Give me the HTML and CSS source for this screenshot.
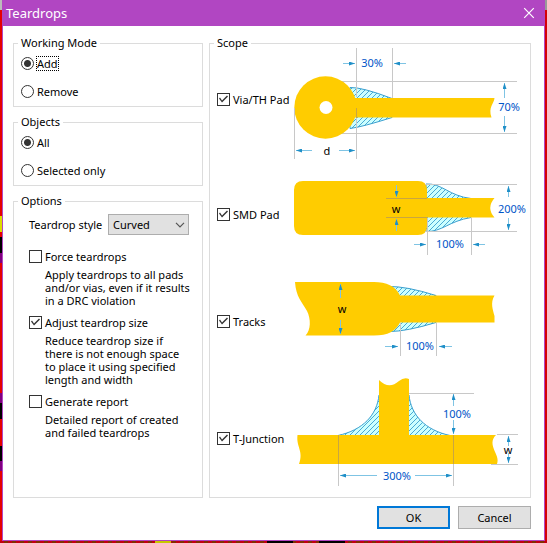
FILE: index.html
```
<!DOCTYPE html>
<html lang="en">
<head>
<meta charset="utf-8">
<title>Teardrops</title>
<link rel="stylesheet" href="styles.css">
</head>
<body>
<form class="dialog">
  <header class="titlebar">
    <h1 class="title">Teardrops</h1>
    <button type="button" class="close" aria-label="Close">
      <svg width="12" height="12" viewBox="0 0 12 12"><path d="M1.2 1.2L10.8 10.8M10.8 1.2L1.2 10.8" stroke="#fff" stroke-width="1.2" fill="none"/></svg>
    </button>
  </header>
  <main class="content">
    <div class="settings">
      <fieldset class="group modes">
        <legend>Working Mode</legend>
        <label class="choice focused"><input type="radio" name="mode" checked><span>Add</span></label>
        <label class="choice"><input type="radio" name="mode"><span>Remove</span></label>
      </fieldset>
      <fieldset class="group modes">
        <legend>Objects</legend>
        <label class="choice"><input type="radio" name="objects" checked><span>All</span></label>
        <label class="choice"><input type="radio" name="objects"><span>Selected only</span></label>
      </fieldset>
      <fieldset class="group options">
        <legend>Options</legend>
        <div class="option-list">
          <div class="style-row">
            <label for="style">Teardrop style</label>
            <div class="select">
              <select id="style"><option>Curved</option><option>Line</option></select>
              <svg class="chevron" width="10" height="6" viewBox="0 0 10 6"><path d="M1 .8L5 4.8L9 .8" fill="none" stroke="#555" stroke-width="1.2"/></svg>
            </div>
          </div>
          <div class="option">
            <label class="choice"><input type="checkbox"><span>Force teardrops</span></label>
            <p>Apply teardrops to all pads<br>and/or vias, even if it results<br>in a DRC violation</p>
          </div>
          <div class="option">
            <label class="choice"><input type="checkbox" checked><span>Adjust teardrop size</span></label>
            <p>Reduce teardrop size if<br>there is not enough space<br>to place it using specified<br>length and width</p>
          </div>
          <div class="option">
            <label class="choice"><input type="checkbox"><span>Generate report</span></label>
            <p>Detailed report of created<br>and failed teardrops</p>
          </div>
        </div>
      </fieldset>
    </div>
    <fieldset class="group scope">
      <legend>Scope</legend>
      <div class="scope-row">
        <label class="choice"><input type="checkbox" checked><span>Via/TH Pad</span></label>
        <svg class="diagram" height="98" viewBox="293 50 237 98">
          <defs>
            <pattern id="hatch" width="5" height="5" patternUnits="userSpaceOnUse">
              <rect width="5" height="5" fill="#ccffff"/>
              <path d="M-1 1L1 -1M0 5L5 0M4 6L6 4" stroke="#3a9fcf" stroke-width="0.9"/>
            </pattern>
            <marker id="tip" viewBox="0 0 6 4" refX="6" refY="2" markerWidth="6" markerHeight="4" markerUnits="userSpaceOnUse" orient="auto">
              <path d="M0 0L6 2L0 4Z" fill="#1f8fc8"/>
            </marker>
          </defs>
          <path class="guide" d="M340 81.5H517M340 133.5H517"/>
          <path class="tear" d="M350 87.5Q362 87 392 98.5V117.5Q362 127 350 128.5Z"/>
          <circle class="copper" cx="325.5" cy="107.500" r="31.2"/>
          <path class="copper" d="M350 98H494.500C494 104 488 107 491.500 117.500H350Z"/>
          <circle cx="326" cy="107.500" r="6.500" fill="#fff"/>
          <path class="guide" d="M356.500 48V97M392.500 48V98M294.500 108V159M356.500 118V159"/>
          <path class="guide on-copper" d="M356.500 108V118"/>
          <g class="arrow">
            <path d="M343 63.500H355"/><path d="M406 63.500H394"/>
            <path d="M312 150.500H296"/><path d="M339 150.500H355"/>
            <path d="M504.500 98V83"/><path d="M504.500 116V132"/>
          </g>
          <text class="dim" x="372" y="67">30%</text>
          <text class="dim" x="509" y="111">70%</text>
          <text class="dim name" x="327" y="155">d</text>
        </svg>
      </div>
      <div class="scope-row">
        <label class="choice"><input type="checkbox" checked><span>SMD Pad</span></label>
        <svg class="diagram" height="98" viewBox="293 165 237 98">
          <path class="tear" d="M426 184C442 183 449 196 471 198.500V217.500C449 221 442 232 426 231.500Z"/>
          <path class="copper" d="M303 181H418Q427 181 427 190V198H494.500Q486 208 494.500 217.500H427V226Q427 235 418 235H303Q294 235 294 226V190Q294 181 303 181Z"/>
          <path class="guide" d="M425 184.500H517M425 231.500H517M427.500 218V255M471.500 218V255"/>
          <path class="guide on-copper" d="M386 198.500H427M386 217.500H427"/>
          <g class="arrow">
            <path d="M396.500 185V197"/><path d="M396.500 231V219"/>
            <path d="M508.500 197V186"/><path d="M508.500 218V230"/>
            <path d="M414 244.500H426"/><path d="M485 244.500H473"/>
          </g>
          <text class="dim name" x="396" y="213">w</text>
          <text class="dim" x="512" y="213">200%</text>
          <text class="dim" x="450" y="248">100%</text>
        </svg>
      </div>
      <div class="scope-row">
        <label class="choice"><input type="checkbox" checked><span>Tracks</span></label>
        <svg class="diagram" height="82" viewBox="293 280 237 82">
          <path class="tear" d="M388 286.500Q406 286 436 295.500V322.500Q406 331.500 390 331.500Z"/>
          <path class="copper" d="M295 282H374C386 282 396 286 400 295.500H494.500C490 303 493 310 494.500 316V322.500H400C396 331 388 335.500 374 335.500H305.500C311 330 311 319 307 311C302 302 296 297 295 282Z"/>
          <path class="guide" d="M400.500 323V356M436.500 323V356"/>
          <g class="arrow">
            <path d="M340.500 298V284"/><path d="M340.500 320V334"/>
            <path d="M385 346.500H398"/><path d="M452 346.500H439"/>
          </g>
          <text class="dim name" x="342" y="313">w</text>
          <text class="dim" x="420" y="350">100%</text>
        </svg>
      </div>
      <div class="scope-row">
        <label class="choice"><input type="checkbox" checked><span>T-Junction</span></label>
        <svg class="diagram" height="118" viewBox="293 379 237 118">
          <path class="tear" d="M379 395C377 415 363 430 338 435.500H450C425 430 411 415 409 395Z"/>
          <path class="copper" d="M379 380Q389 390 399 381Q404 377 409 379V435H496C486 445 501 455 497 464H299C304 451 296 447 297.500 435H379Z"/>
          <path class="guide" d="M409 393.500H474M497 434.500H518M491 464.500H518M338.500 464V486M453.500 464V486"/>
          <path class="guide on-copper" d="M338.500 435V464M453.500 435V464"/>
          <g class="arrow">
            <path d="M453.500 406V394"/><path d="M453.500 420V434"/>
            <path d="M377 475.500H340"/><path d="M415 475.500H452"/>
            <path d="M508.500 446V436"/><path d="M508.500 453V463"/>
          </g>
          <text class="dim" x="457" y="418">100%</text>
          <text class="dim" x="397" y="480">300%</text>
          <text class="dim name" x="508" y="454">w</text>
        </svg>
      </div>
    </fieldset>
  </main>
  <footer class="actions">
    <button type="submit" class="button primary">OK</button>
    <button type="button" class="button">Cancel</button>
  </footer>
</form>
</body>
</html>
```
FILE: styles.css
```
* {
  box-sizing: border-box;
}

body {
  margin: 0;
  padding: 0 2px 2px;
  min-height: 100vh;
  display: flex;
  font: 11px/13px "Noto Sans", "Open Sans", sans-serif;
  color: #000;
  background:
    linear-gradient(90deg, transparent 155px, #c8c800 155px 171px, transparent 171px 267px, #000 267px 293px, transparent 293px 319px, #000 319px 345px, transparent 345px) 0 100% / 100% 2px no-repeat,
    repeating-linear-gradient(90deg, #c00010 0 4px, #803000 4px 8px) 0 100% / 100% 2px no-repeat,
    linear-gradient(#bbb 10px, transparent 10px 216px, #dddd00 216px 232px, transparent 232px 237px, #000 237px 253px, #800080 253px 263px, transparent 263px 393px, #800080 393px 403px, #000 403px 419px, transparent 419px 446px, #000 446px 461px, #800080 461px 471px, transparent 471px) 0 0 / 2px 100% no-repeat,
    linear-gradient(#999 10px, #d40008 10px) 100% 0 / 2px 100% no-repeat,
    #e60000;
}

h1,
p {
  margin: 0;
}

button,
select,
input {
  margin: 0;
  font: inherit;
  color: inherit;
}

.dialog {
  flex: 1;
  display: flex;
  flex-direction: column;
  border: 1px solid #b146c2;
  background: #fff;
}

.titlebar {
  height: 25px;
  display: flex;
  align-items: center;
  justify-content: space-between;
  padding: 0 7px 2px 3px;
  background: #b146c2;
  color: #fff;
}

.title {
  font-size: 13px;
  line-height: 18px;
  font-weight: 400;
}

.close {
  display: flex;
  padding: 2px;
  border: 0;
  background: none;
}

.content {
  flex: 1;
  display: grid;
  grid-template-columns: 190px 1fr;
  gap: 6px;
  padding: 10px 13px 0 10px;
}

.settings {
  display: flex;
  flex-direction: column;
  gap: 8px;
}

.group {
  min-width: 0;
  margin: 0;
  padding: 0 7px;
  border: 1px solid #dcdcdc;
}

.group legend {
  height: 14px;
  margin-left: -3px;
  padding: 0 3px;
  line-height: 14px;
}

.modes {
  display: flex;
  flex-direction: column;
  gap: 14px;
  padding-top: 6px;
  padding-bottom: 8px;
}

.choice {
  display: flex;
  align-items: center;
  gap: 3px;
  height: 14px;
  white-space: nowrap;
}

.focused span {
  outline: 1px dotted #000;
}

input[type="radio"],
input[type="checkbox"] {
  appearance: none;
  flex: none;
  width: 13px;
  height: 13px;
  border: 1px solid #333;
  background: #fff;
}

input[type="radio"] {
  border-radius: 50%;
}

input[type="radio"]:checked {
  background: radial-gradient(circle, #333 3px, #fff 4px);
}

input[type="checkbox"]:checked::before {
  content: "";
  display: block;
  width: 11px;
  height: 11px;
  background: #333;
  clip-path: polygon(1px 5px, 2px 4px, 4px 7px, 9px 2px, 10px 3px, 4px 9px);
}

.options {
  flex: 1;
}

.option-list {
  display: flex;
  flex-direction: column;
  gap: 8px;
  padding: 6px 6px 0 8px;
}

.style-row {
  display: flex;
  align-items: center;
  justify-content: space-between;
  margin-bottom: 6px;
}

.select {
  position: relative;
  width: 81px;
}

.select select {
  appearance: none;
  display: block;
  width: 100%;
  height: 21px;
  padding: 0 4px;
  border: 1px solid #adadad;
  border-radius: 0;
  background: #e1e1e1;
}

.chevron {
  position: absolute;
  right: 4px;
  top: 8px;
  pointer-events: none;
}

.option {
  display: flex;
  flex-direction: column;
  gap: 5px;
}

.option p {
  padding-left: 16px;
  white-space: nowrap;
}

.scope {
  display: flex;
  flex-direction: column;
  gap: 17px;
  padding-right: 0;
}

.scope-row {
  display: flex;
  align-items: center;
}

.scope-row .choice {
  width: 76px;
}

.diagram {
  flex: 1;
  min-width: 0;
  overflow: visible;
}

.copper {
  fill: #ffcc00;
}

.tear {
  fill: url(#hatch);
  stroke: #3a9fcf;
}

.guide {
  fill: none;
  stroke: #c8c8c8;
}

.on-copper {
  stroke: #c9a640;
}

.arrow path {
  fill: none;
  stroke: #7fc4e4;
  marker-end: url(#tip);
}

.dim {
  fill: #0055c8;
  text-anchor: middle;
}

.name {
  fill: #000;
}

.actions {
  display: flex;
  justify-content: flex-end;
  gap: 8px;
  padding: 8px 13px 11px;
}

.button {
  width: 73px;
  height: 23px;
  padding: 0;
  border: 1px solid #adadad;
  background: #e1e1e1;
}

.primary {
  border: 2px solid #0078d7;
}
```
